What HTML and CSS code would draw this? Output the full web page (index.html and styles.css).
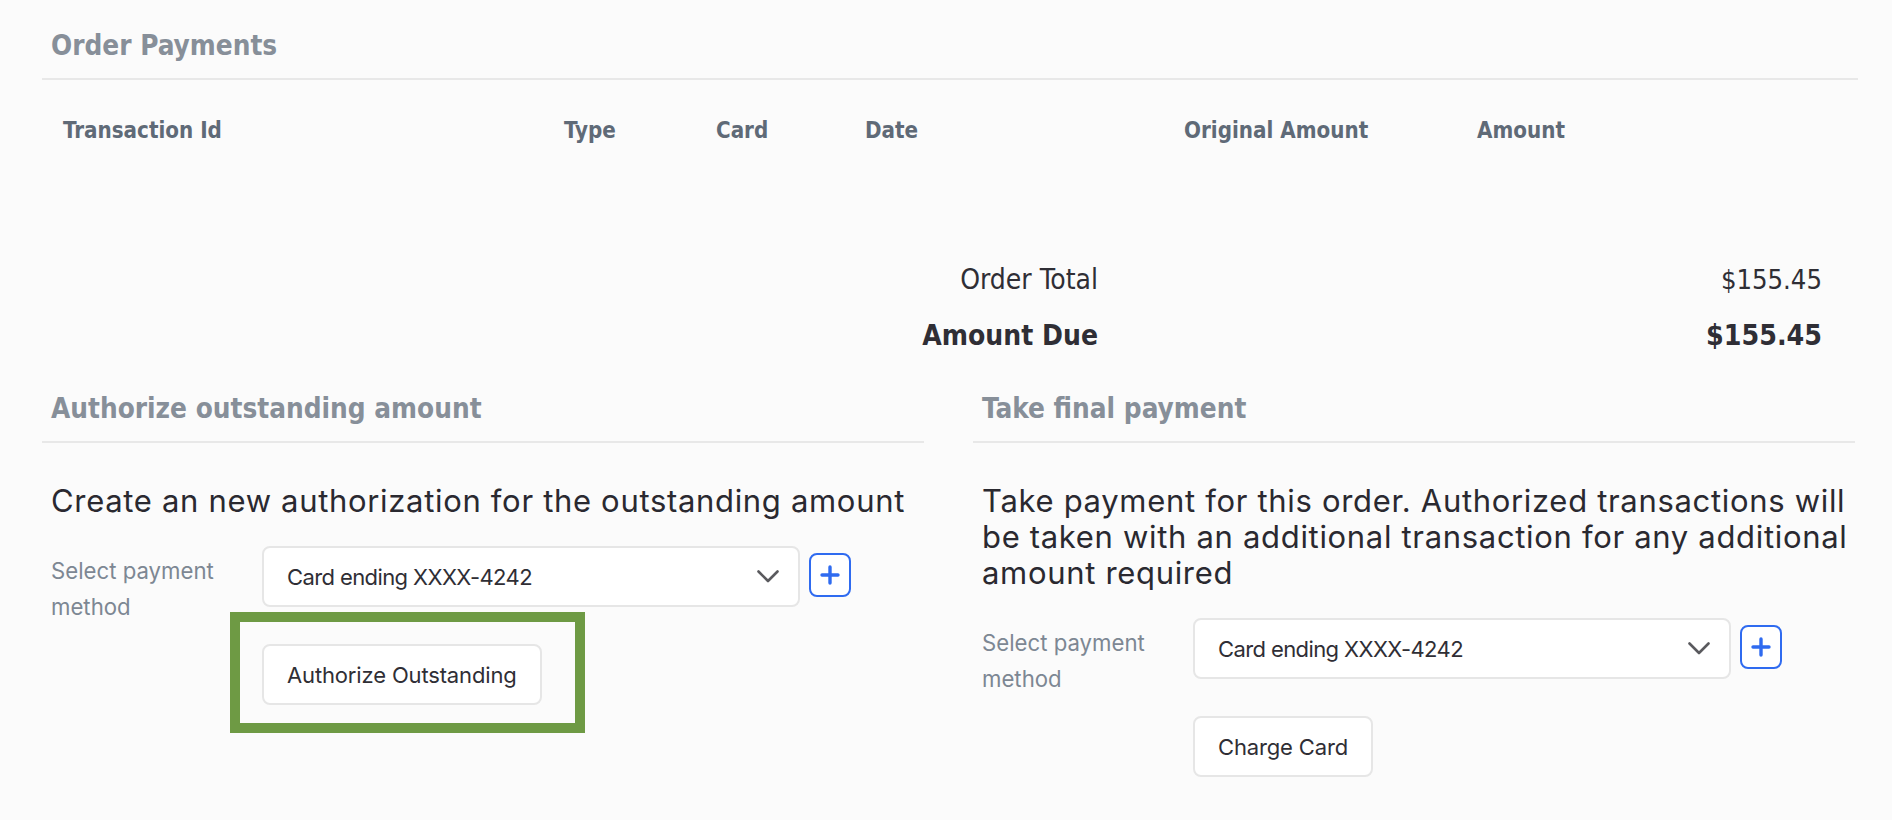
FILE: index.html
```html
<!DOCTYPE html>
<html lang="en">
<head>
<meta charset="utf-8">
<title>Order Payments</title>
<link rel="stylesheet" href="styles.css">
</head>
<body>
<div class="page">
  <section class="payments">
    <h2 class="section-title">Order Payments</h2>
    <div class="tx-head">
      <div class="tx-col">Transaction Id</div>
      <div class="tx-col">Type</div>
      <div class="tx-col">Card</div>
      <div class="tx-col">Date</div>
      <div class="tx-col">Original Amount</div>
      <div class="tx-col">Amount</div>
    </div>
    <div class="totals">
      <div class="total-label">Order Total</div>
      <div class="total-value">$155.45</div>
      <div class="total-label strong">Amount Due</div>
      <div class="total-value strong">$155.45</div>
    </div>
  </section>

  <div class="actions">
    <section class="action">
      <h2 class="section-title">Authorize outstanding amount</h2>
      <p class="action-text">Create an new authorization for the outstanding amount</p>
      <div class="form-row">
        <label class="form-label">Select payment method</label>
        <div class="control">
          <div class="select-line">
            <div class="select">
              <span class="select-value">Card ending XXXX-4242</span>
              <svg class="chevron" width="22" height="13" viewBox="0 0 22 13"><polyline points="1.5,1.5 11,11 20.5,1.5" fill="none" stroke="#5a5a5e" stroke-width="2.6" stroke-linecap="round" stroke-linejoin="round"/></svg>
            </div>
            <button class="add-btn" type="button" aria-label="Add payment method">
              <svg width="20" height="20" viewBox="0 0 20 20"><path d="M10 2v16M2 10h16" stroke="#2f6bf0" stroke-width="3.4" stroke-linecap="round"/></svg>
            </button>
          </div>
          <div class="btn-wrap">
            <button class="btn" type="button">Authorize Outstanding</button>
            <span class="highlight"></span>
          </div>
        </div>
      </div>
    </section>

    <section class="action">
      <h2 class="section-title">Take final payment</h2>
      <p class="action-text">Take payment for this order. Authorized transactions will be taken with an additional transaction for any additional amount required</p>
      <div class="form-row">
        <label class="form-label">Select payment method</label>
        <div class="control">
          <div class="select-line">
            <div class="select">
              <span class="select-value">Card ending XXXX-4242</span>
              <svg class="chevron" width="22" height="13" viewBox="0 0 22 13"><polyline points="1.5,1.5 11,11 20.5,1.5" fill="none" stroke="#5a5a5e" stroke-width="2.6" stroke-linecap="round" stroke-linejoin="round"/></svg>
            </div>
            <button class="add-btn" type="button" aria-label="Add payment method">
              <svg width="20" height="20" viewBox="0 0 20 20"><path d="M10 2v16M2 10h16" stroke="#2f6bf0" stroke-width="3.4" stroke-linecap="round"/></svg>
            </button>
          </div>
          <div class="btn-wrap">
            <button class="btn" type="button">Charge Card</button>
          </div>
        </div>
      </div>
    </section>
  </div>
</div>
</body>
</html>
```

FILE: styles.css
```css
* { box-sizing: border-box; }

html, body {
  margin: 0;
  padding: 0;
  background: #fbfbfb;
}

body {
  font-family: "DejaVu Sans Condensed", "DejaVu Sans", sans-serif;
  color: #2f2e35;
}

.page {
  width: 1892px;
  padding: 0 34px 0 42px;
}

.section-title {
  margin: 0;
  padding: 0 0 12px 9px;
  font-family: "DejaVu Sans Condensed", "DejaVu Sans", sans-serif;
  font-weight: bold;
  font-size: 27.7px;
  line-height: 40px;
  color: #878f99;
  border-bottom: 2px solid #e8e8e8;
}

.payments {
  padding-top: 26px;
}

.tx-head {
  display: grid;
  grid-template-columns: 501px 152px 149px 319px 293px 1fr;
  margin-top: 35px;
  padding-left: 9px;
}

.tx-col {
  padding-left: 12px;
  font-weight: bold;
  font-size: 22.2px;
  line-height: 30px;
  color: #5f6a77;
}

.totals {
  display: grid;
  grid-template-columns: 1fr 724px;
  margin-top: 107px;
  padding-right: 36px;
}

.total-label,
.total-value {
  text-align: right;
  font-size: 28px;
  line-height: 56px;
  color: #2f2e35;
}

.total-value {
  font-size: 27.2px;
}

.strong {
  font-weight: bold;
}

.total-value.strong {
  font-size: 28.3px;
}

.actions {
  display: grid;
  grid-template-columns: 882px 882px;
  column-gap: 49px;
  margin-top: 25px;
}

.action-text {
  margin: 40px 0 0;
  padding-left: 9px;
  font-family: "Inter", "Noto Sans", sans-serif;
  font-size: 31px;
  letter-spacing: 0.68px;
  line-height: 36px;
  color: #2a2930;
}

.form-row {
  display: grid;
  grid-template-columns: 211px 1fr;
  margin-top: 27px;
  padding-left: 9px;
}

.form-label {
  padding-top: 7px;
  font-family: "Inter", "Noto Sans", sans-serif;
  font-size: 22.2px;
  line-height: 36px;
  color: #7d8793;
}

.select-line {
  display: flex;
  align-items: center;
  gap: 9px;
}

.select {
  display: flex;
  align-items: center;
  justify-content: space-between;
  width: 538px;
  height: 61px;
  padding: 0 19px 0 23px;
  background: #ffffff;
  border: 2px solid #e6e6e6;
  border-radius: 8px;
}

.select-value {
  font-family: "Inter", "Noto Sans", sans-serif;
  font-size: 22px;
  letter-spacing: -0.6px;
  color: #2f2e35;
}

.add-btn {
  display: flex;
  align-items: center;
  justify-content: center;
  width: 42px;
  height: 44px;
  padding: 0;
  margin-top: -3px;
  background: #ffffff;
  border: 2px solid #2f6bf0;
  border-radius: 8px;
}

.btn-wrap {
  position: relative;
  display: inline-block;
  margin-top: 37px;
}

.btn {
  height: 61px;
  padding: 0 23px;
  font-family: "Inter", "Noto Sans", sans-serif;
  font-size: 22px;
  letter-spacing: -0.15px;
  color: #2f2e35;
  background: #ffffff;
  border: 2px solid #e6e6e6;
  border-radius: 8px;
}

.highlight {
  position: absolute;
  left: -32px;
  top: -32px;
  width: 355px;
  height: 121px;
  border: 10px solid #6e9a44;
  pointer-events: none;
}
```
